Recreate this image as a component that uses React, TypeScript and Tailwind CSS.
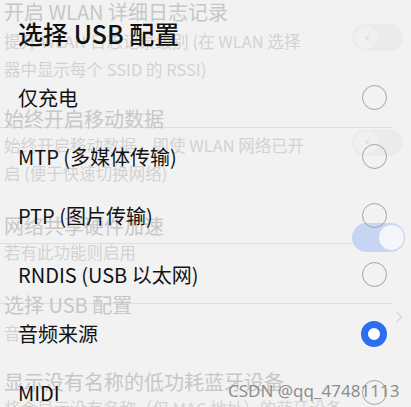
import React from "react";

const FONT = { fontFamily: '"Noto Sans CJK SC", "Noto Sans", sans-serif' };

const gTitle = "text-[20px] leading-[24px] text-[#c7c7c7] whitespace-nowrap";
const gDesc = "text-[16.5px] leading-[28px] text-[#d2d2d2] whitespace-nowrap";

function FaintToggle({ className = "" }: { className?: string }) {
  return (
    <div className={`relative h-[27px] w-[51px] shrink-0 rounded-full bg-[#ebebeb] ${className}`}>
      <div className="absolute left-[3px] top-[2px] flex h-[23px] w-[23px] items-center justify-center rounded-full bg-[#f0f0f0]">
        <div className="h-[4px] w-[4px] rounded-full bg-[#e2e2e2]" />
      </div>
    </div>
  );
}

function BlueToggle() {
  return (
    <div className="relative mb-[6px] h-[29px] w-[53px] shrink-0 rounded-full bg-[#c6d6f2]">
      <div className="absolute right-0 top-[1px] h-[27px] w-[27px] rounded-full border border-[#c9d7f0] bg-[#f4f6fa]" />
    </div>
  );
}

function Divider() {
  return <div className="h-px w-[392px] -ml-1 bg-[#dedede]" />;
}

function Radio({ checked }: { checked?: boolean }) {
  if (checked)
    return <div className="h-[26px] w-[26px] shrink-0 rounded-full border-[7px] border-[#2b6ef2] bg-white" />;
  return <div className="h-[25px] w-[25px] shrink-0 rounded-full border-[1.5px] border-[#a3a3a3]" />;
}

const options = [
  { label: "仅充电" },
  { label: "MTP (多媒体传输)" },
  { label: "PTP (图片传输)" },
  { label: "RNDIS (USB 以太网)" },
  { label: "音频来源", checked: true },
  { label: "MIDI" },
];

export default function App() {
  return (
    <div className="relative h-[407px] w-[411px] overflow-hidden bg-[#f2f2f2]" style={FONT}>
      {/* faded settings page behind */}
      <div className="flex flex-col">
        <div className="flex items-center pl-1 pr-2">
          <div className="min-w-0 flex-1">
            <div className={gTitle}>开启 WLAN 详细日志记录</div>
            <div className={`${gDesc} mt-[3px]`}>
              提升 WLAN 日志记录级别 (在 WLAN 选择
              <br />
              器中显示每个 SSID 的 RSSI)
            </div>
          </div>
          <FaintToggle className="mb-[8px]" />
        </div>

        <div className="mt-[24px] flex items-center pl-1 pr-2">
          <div className="min-w-0 flex-1">
            <div className={gTitle}>始终开启移动数据</div>
            <div className="-mt-[4px] mb-[3px]">
              <Divider />
            </div>
            <div className={gDesc}>
              始终开启移动数据，即使 WLAN 网络已开
              <br />
              启 (便于快速切换网络)
            </div>
          </div>
          <FaintToggle className="mb-[10px]" />
        </div>

        <div className="mt-[27px] flex items-center pl-1 pr-[6px]">
          <div className="min-w-0 flex-1">
            <div className={gTitle}>网络共享硬件加速</div>
            <div className="mt-[5px] -mb-[6px]">
              <Divider />
            </div>
            <div className={gDesc}>若有此功能则启用</div>
          </div>
          <BlueToggle />
        </div>

        <div className="mt-[27px] flex items-center pl-1 pr-[8px]">
          <div className="min-w-0 flex-1">
            <div className="mt-[10px] -mb-[11px]">
              <Divider />
            </div>
            <div className={gTitle}>选择 USB 配置</div>
            <div className={`${gDesc} mt-[2px]`}>音</div>
          </div>
          <svg width="8" height="12" viewBox="0 0 8 12" className="mb-[6px] shrink-0">
            <path d="M1.5 1 L6.5 6 L1.5 11" fill="none" stroke="#d6d6d6" strokeWidth="1.4" />
          </svg>
        </div>

        <div className="mt-[23px] flex items-center pl-1 pr-2">
          <div className="min-w-0 flex-1">
            <div className={gTitle}>显示没有名称的低功耗蓝牙设备</div>
            <div className={gDesc}>将会显示没有名称（仅 MAC 地址）的蓝牙设备</div>
          </div>
        </div>
      </div>

      {/* dialog */}
      <div className="absolute inset-0 flex flex-col pl-[18px] pr-[24px]">
        <div className="mt-[17px] text-[25px] font-medium leading-[32px] text-[#111111]">选择 USB 配置</div>
        <div className="mt-[19px] flex flex-col">
          {options.map((o) => (
            <div key={o.label} className="flex h-[59px] items-center justify-between">
              <span className="text-[20px] leading-[24px] text-[#121212]">{o.label}</span>
              <Radio checked={o.checked} />
            </div>
          ))}
        </div>
      </div>

      {/* watermark */}
      <div className="absolute left-[228px] top-[380px] text-[17px] leading-[22px] text-[#8e8e8e]" style={{ fontFamily: '"Noto Sans", sans-serif' }}>
        CSDN @qq_47481113
      </div>
    </div>
  );
}
